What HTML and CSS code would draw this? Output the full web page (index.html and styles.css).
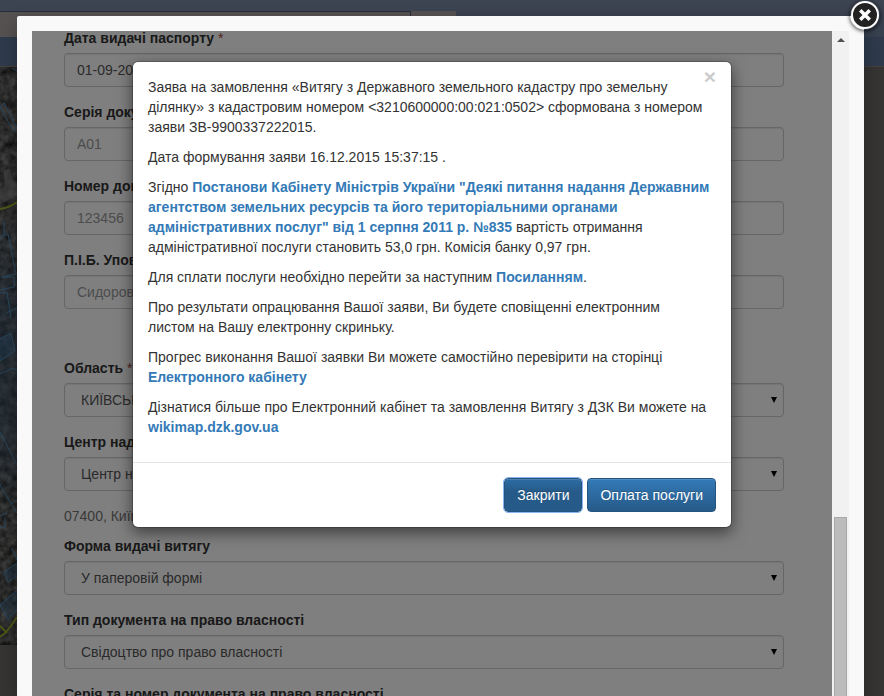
FILE: index.html
```
<!DOCTYPE html>
<html lang="uk">
<head>
<meta charset="utf-8">
<title>Замовлення витягу</title>
<link rel="stylesheet" href="styles.css">
</head>
<body>
<div class="site" aria-hidden="true">
  <div class="site-top"></div>
  <div class="site-tabs"><span class="tab-main"></span><span class="tab-extra"></span></div>
  <div class="site-nav"></div>
  <div class="site-map">
    <svg class="map-art" width="17" height="578" viewBox="0 67 17 578">
      <filter id="grain" x="0" y="0" width="100%" height="100%" color-interpolation-filters="sRGB">
        <feTurbulence type="fractalNoise" baseFrequency="0.12" numOctaves="4" seed="4"/>
        <feColorMatrix type="matrix" values="0.5 0 0 0 -0.07  0.5 0 0 0 -0.07  0.5 0 0 0 -0.07  0 0 0 0 1"/>
      </filter>
      <linearGradient id="tint" x1="0" y1="0" x2="0" y2="1">
        <stop offset="0" stop-color="#1d2c3a" stop-opacity="0"/>
        <stop offset=".3" stop-color="#1d2c3a" stop-opacity=".5"/>
        <stop offset=".7" stop-color="#1d2c3a" stop-opacity=".5"/>
        <stop offset="1" stop-color="#1d2c3a" stop-opacity="0"/>
      </linearGradient>
      <rect x="0" y="67" width="17" height="578" fill="#2a2928"/>
      <rect x="0" y="67" width="17" height="578" filter="url(#grain)" opacity=".6"/>
      <rect x="0" y="210" width="17" height="310" fill="url(#tint)"/>
      <path d="M4 170l6-1 3 12 4 3v12l-17 8v-14l5-4z" fill="#454545" opacity=".6"/>
      <path d="M0 339l11-6 4 18-15 10zM4 572l13-9v13l-9 6zM0 605l17-15v20l-9 10z" fill="#23405a" opacity=".35"/>
      <path d="M0 107l4-4 13 25-3 4zM12 68l5 3M3 236l5-2 8 40-14 3M0 240l4-6v-12M2 277h12v10l-14 3M0 293l7-1 4 26M6 313l11-5M0 339l11-6 4 18-15 10M0 374l13-6 4 2M0 432l17 33M0 485l17 28M11 504l6-4M0 516l7-3M0 528l5-1v-10M12 548l5 12M4 572l13-9M4 572l4 10 9-6M0 605l17-15M0 605l8 15 9-10" fill="none" stroke="#29485f"/>
      <path d="M0 209c7-1 12-3 17-7M0 626l7 7M0 637c7-4 12-12 17-20" fill="none" stroke="#4d5818" stroke-width="2"/>
    </svg>
  </div>
</div>

<div class="lightbox">
  <button class="lightbox-close" type="button" aria-label="Закрити вікно">
    <svg width="30" height="30" viewBox="0 0 30 30"><circle cx="15" cy="15" r="13" fill="#222" stroke="#fff" stroke-width="2"/><path d="M11.5 11.5l7 7M18.500 11.500l-7 7" stroke="#fff" stroke-width="3.500" stroke-linecap="square"/></svg>
  </button>
  <div class="frame">
    <div class="viewport">
      <form class="order-form">
        <div class="field"><label for="issued">Дата видачі паспорту <span class="req">*</span></label><input id="issued" class="control" type="text" value="01-09-2005"></div>
        <div class="field"><label for="series">Серія документу</label><input id="series" class="control" type="text" placeholder="А01"></div>
        <div class="field"><label for="number">Номер документу</label><input id="number" class="control" type="text" placeholder="123456"></div>
        <div class="field"><label for="person">П.І.Б. Уповноваженої особи</label><input id="person" class="control" type="text" placeholder="Сидоров"></div>
        <div class="field section-start"><label for="region">Область <span class="req">*</span></label><div class="select-wrap"><select id="region" class="control"><option>КИЇВСЬКА</option></select><svg class="arrow" width="6" height="6" viewBox="0 0 6 6"><path d="M0 0h6L3 6z"/></svg></div></div>
        <div class="field"><label for="center">Центр надання послуг</label><div class="select-wrap"><select id="center" class="control"><option>Центр надання послуг</option></select><svg class="arrow" width="6" height="6" viewBox="0 0 6 6"><path d="M0 0h6L3 6z"/></svg></div></div>
        <p class="help">07400, Київська область</p>
        <div class="field"><label for="format">Форма видачі витягу</label><div class="select-wrap"><select id="format" class="control"><option>У паперовій формі</option></select><svg class="arrow" width="6" height="6" viewBox="0 0 6 6"><path d="M0 0h6L3 6z"/></svg></div></div>
        <div class="field"><label for="doctype">Тип документа на право власності</label><div class="select-wrap"><select id="doctype" class="control"><option>Свідоцтво про право власності</option></select><svg class="arrow" width="6" height="6" viewBox="0 0 6 6"><path d="M0 0h6L3 6z"/></svg></div></div>
        <div class="field"><label for="docnumber">Серія та номер документа на право власності</label><input id="docnumber" class="control" type="text"></div>
      </form>
      <div class="backdrop">
        <div class="modal" role="dialog" aria-modal="true">
          <div class="modal-body">
            <button class="dismiss" type="button" aria-label="Закрити повідомлення">×</button>
            <p>Заява на замовлення «Витягу з Державного земельного кадастру про земельну ділянку» з кадастровим номером &lt;3210600000:00:021:0502&gt; сформована з номером заяви ЗВ-9900337222015.</p>
            <p>Дата формування заяви 16.12.2015 15:37:15 .</p>
            <p>Згідно <a href="#">Постанови Кабінету Міністрів України "Деякі питання надання Державним агентством земельних ресурсів та його територіальними органами адміністративних послуг" від 1 серпня 2011 р. №835</a> вартість отримання адміністративної послуги становить 53,0 грн. Комісія банку 0,97 грн.</p>
            <p>Для сплати послуги необхідно перейти за наступним <a href="#">Посиланням</a>.</p>
            <p>Про результати опрацювання Вашої заяви, Ви будете сповіщенні електронним<br>листом на Вашу електронну скриньку.</p>
            <p>Прогрес виконання Вашої заявки Ви можете самостійно перевірити на сторінці <a href="#">Електронного кабінету</a></p>
            <p>Дізнатися більше про Електронний кабінет та замовлення Витягу з ДЗК Ви можете на <a href="#">wikimap.dzk.gov.ua</a></p>
          </div>
          <div class="modal-footer">
            <button class="btn btn-active" type="button">Закрити</button>
            <button class="btn" type="button">Оплата послуги</button>
          </div>
        </div>
      </div>
    </div>
    <div class="scrollbar" aria-hidden="true">
      <svg class="scroll-up" width="8" height="4" viewBox="0 0 8 4"><path d="M0 4L4 0l4 4z" fill="#505050"/></svg>
      <div class="thumb"></div>
    </div>
  </div>
</div>
</body>
</html>
```
FILE: styles.css
```
* { box-sizing: border-box; }
body {
  margin: 0;
  height: 100vh;
  overflow: hidden;
  position: relative;
  background: #373533;
  color: #333;
  font: 14px/20px "Liberation Sans", Arial, sans-serif;
}
.site { height: 100%; }
.site-top { height: 11px; background: #3d4451; }
.site-tabs { height: 26px; display: flex; background: linear-gradient(#3b4250, #36404f); }
.tab-main { width: 411px; background: #565251; border: solid #272e3a; border-width: 1px 1px 0 0; }
.tab-extra { width: 45px; background: #565251; }
.site-nav { height: 30px; background: #2f3b4c; border-bottom: 1px solid #444140; }
.site-map { height: 578px; background: #373533; }
.map-art { display: block; }

.lightbox {
  position: absolute;
  inset: 16px 20px 0 17px;
  padding: 15px 15px 0;
  background: #f9f9f9;
  border-radius: 2px 2px 0 0;
  box-shadow: 0 8px 20px rgba(0, 0, 0, .3);
}
.lightbox-close {
  position: absolute;
  top: -16px;
  right: -16px;
  width: 30px;
  height: 30px;
  padding: 0;
  border: 0;
  border-radius: 50%;
  background: none;
  box-shadow: 0 1px 4px rgba(0, 0, 0, .8);
}
.lightbox-close svg { display: block; }
.frame { height: 100%; display: flex; }
.viewport { flex: 1; position: relative; overflow: hidden; background: #fff; }
.scrollbar { width: 17px; padding: 7px 2px 0; background: #f1f1f1; display: flex; flex-direction: column; }
.scroll-up { align-self: center; }
.thumb { flex: 1; margin-top: 475px; background: #bcbcbc; border: 1px solid #a8a8a8; border-bottom: 0; }

.order-form { margin: -3px 48px 0 32px; }
.field { margin-bottom: 15px; }
.field label { display: block; margin-bottom: 5px; font-weight: bold; }
.section-start { margin-top: 49px; }
.req { color: #a94442; font-weight: normal; }
.control {
  display: block;
  width: 100%;
  height: 34px;
  padding: 6px 12px;
  border: 1px solid #ccc;
  border-radius: 4px;
  background: #fff;
  box-shadow: inset 0 1px 1px rgba(0, 0, 0, .08);
  color: #555;
  font: inherit;
  appearance: none;
}
.control::placeholder { color: #999; opacity: 1; }
select.control { padding: 6px 16px; }
.select-wrap { position: relative; }
.arrow { position: absolute; right: 7px; top: 14px; }
.help { margin: 0 0 10px; color: #737373; }

.backdrop { position: absolute; inset: 0; padding: 30px 16px 0; background: rgba(0, 0, 0, .5); }
.modal {
  max-width: 600px;
  margin: 0 auto;
  background: #fff;
  background-clip: padding-box;
  border: 1px solid rgba(0, 0, 0, .2);
  border-radius: 6px;
  box-shadow: 0 5px 15px rgba(0, 0, 0, .5);
}
.modal-body { position: relative; padding: 15px 15px 25px; }
.modal-body p { margin: 0; }
.modal-body p + p { margin-top: 10px; }
.modal-body a { color: #337ab7; font-weight: bold; text-decoration: none; }
.dismiss {
  position: absolute;
  top: 4px;
  right: 15px;
  padding: 0;
  border: 0;
  background: none;
  color: #ccc;
  font: bold 21px/21px "Liberation Sans", Arial, sans-serif;
}
.modal-footer { display: flex; justify-content: flex-end; gap: 5px; padding: 15px; border-top: 1px solid #e5e5e5; }
.btn {
  height: 34px;
  padding: 6px 12px;
  border: 1px solid #245580;
  border-radius: 4px;
  background: linear-gradient(#337ab7, #265a88);
  box-shadow: inset 0 1px 0 rgba(255, 255, 255, .15);
  color: #fff;
  font: inherit;
  text-shadow: 0 -1px 0 rgba(0, 0, 0, .2);
}
.btn-active { background: linear-gradient(#2c6ca3, #265a88 40%); outline: 1px solid #8ab4f0; outline-offset: 0; }
```
